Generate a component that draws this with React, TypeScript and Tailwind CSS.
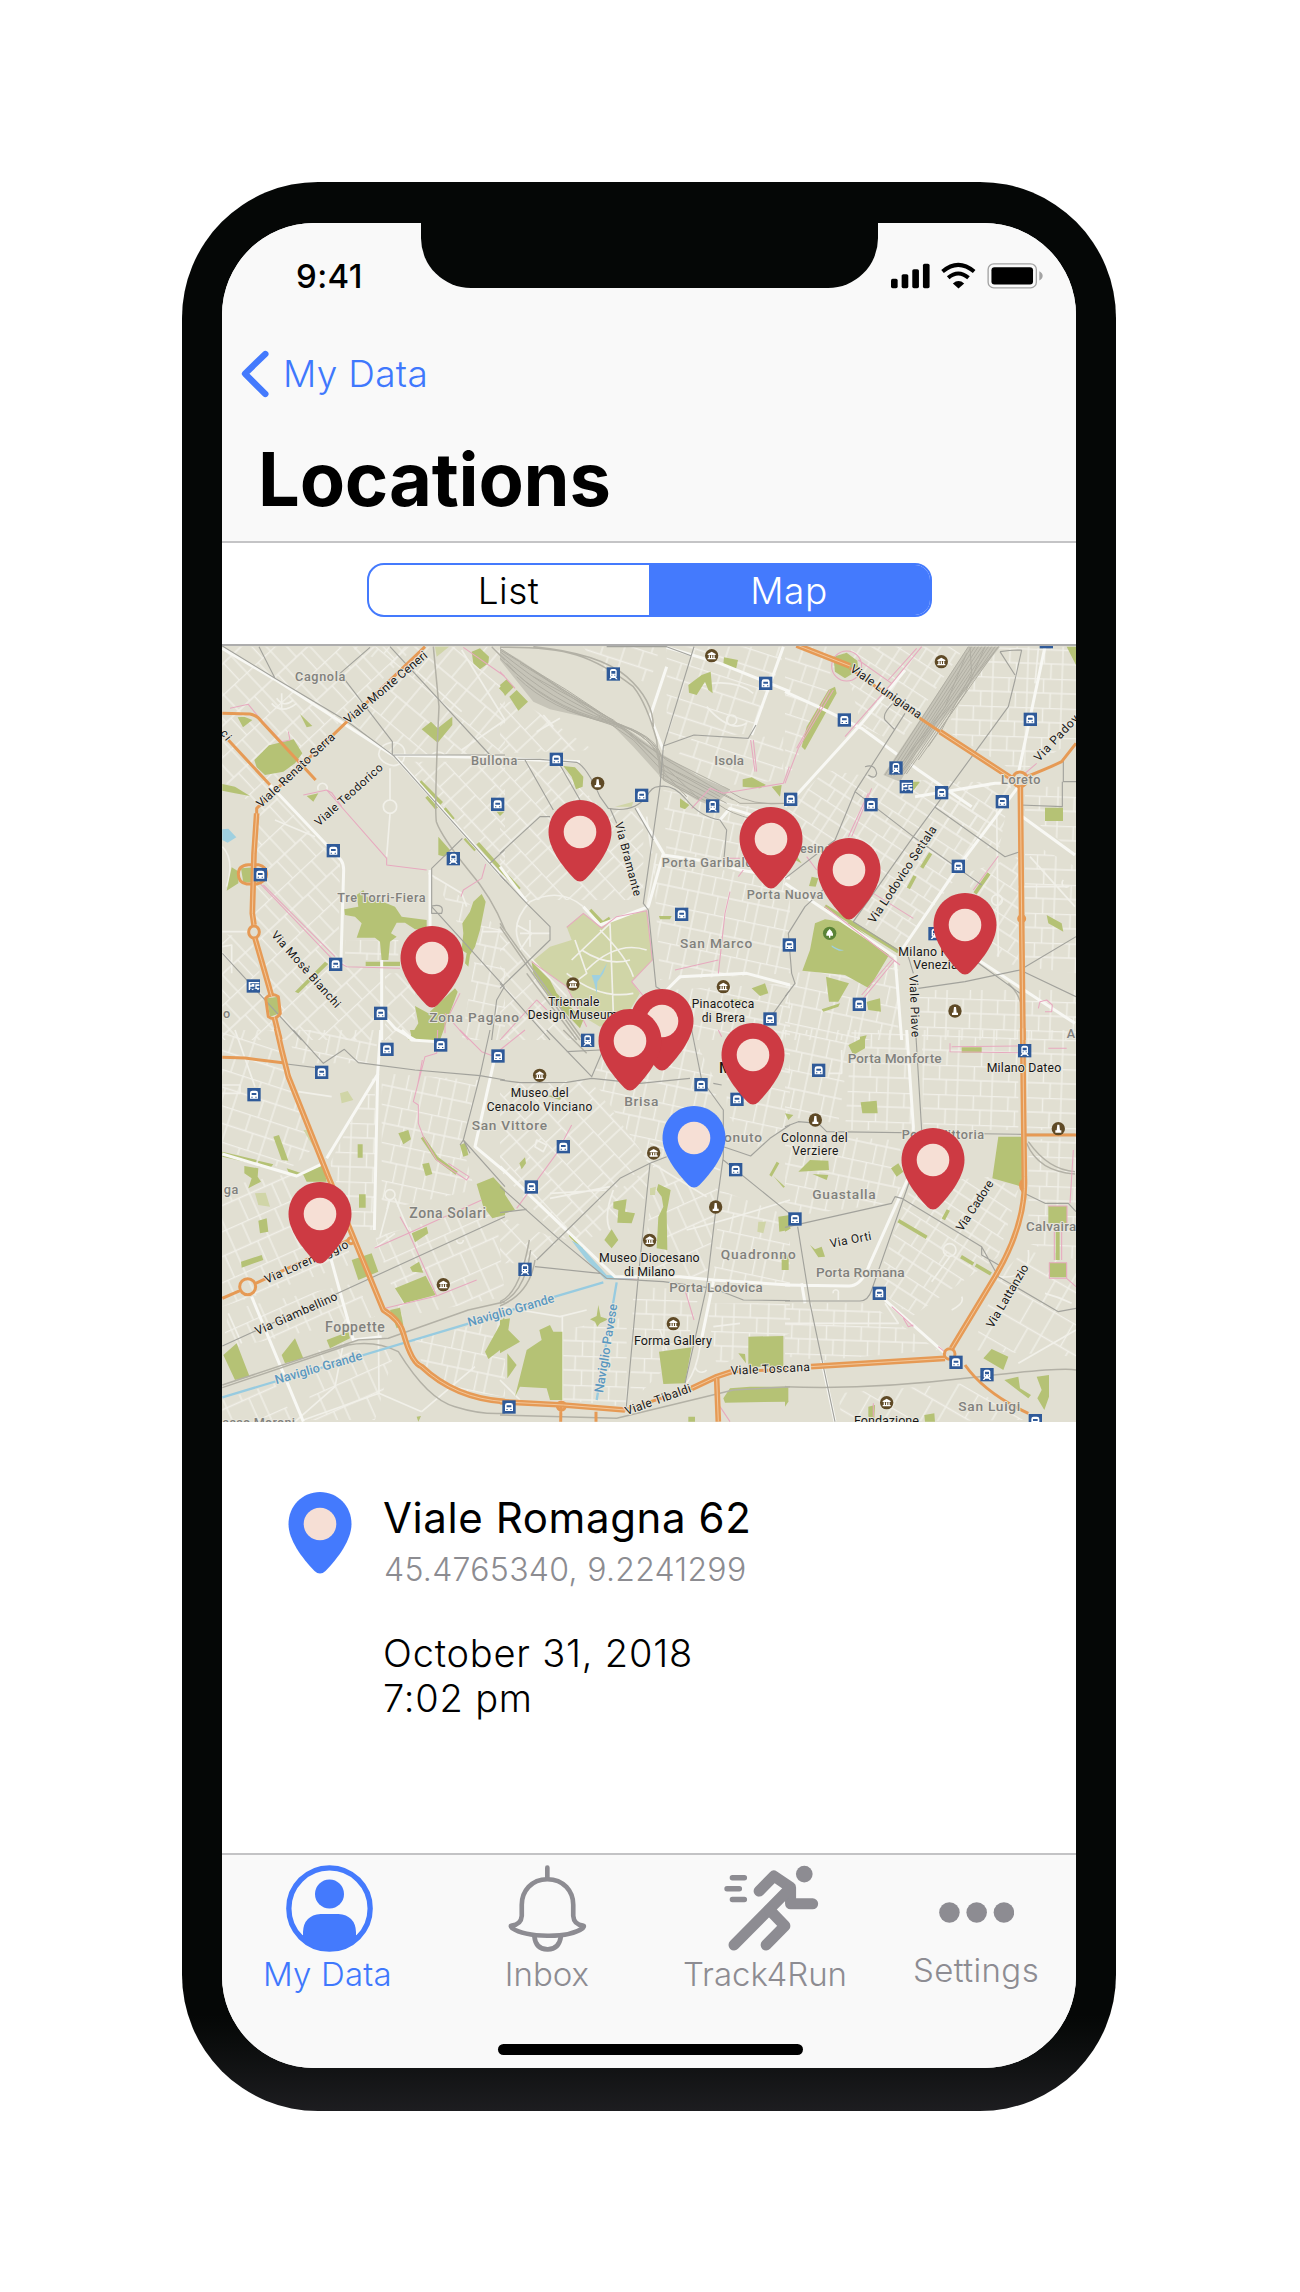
import React from "react";

type RegionData = {
  x: number;
  y: number;
  grids: [string, string][];
  parks: string;
  light?: string;
  strips?: string;
  water?: string;
  canal?: string;
  minor: string;
  main: string;
  tram: string;
  rail: string;
  yardFill?: string;
  yard?: string;
  pink: string;
  orange: string;
  thinOrange?: string;
};

// Each map tile is drawn in thirds of a pixel from its own origin.
const TILES: RegionData[] = [
  {
    x: 215, y: 640,
    grids: [
      ["g1", "22,20 600,20 120,500 22,420"],
      ["g2", "400,20 870,20 870,340 540,345 400,240 560,90"],
      ["g3", "560,365 870,365 870,700"],
      ["g1", "130,520 165,450 375,670 370,960 500,1000 500,1200 200,1200 120,860"],
      ["g4", "390,900 550,900 550,960 390,960"],
      ["g5", "650,700 870,880 870,1200 740,1200 780,950"],
      ["g1", "22,880 110,900 185,1200 22,1200"],
      ["g1", "510,1000 600,1000 600,1200 510,1200"],
    ],
    parks: "M68 232L88 230 112 240 84 262ZM118 360L162 316 236 298 262 340 240 370 205 395 150 405 125 382ZM255 222L292 258 275 262ZM22 432L60 440 105 468 60 460 22 452ZM50 682L72 695 70 730 35 752ZM770 35L795 25 822 50 820 70 795 88 775 70ZM620 268L648 245 668 265 712 230 712 255 668 308ZM670 590L705 630 690 650 670 645ZM868 128L852 145 868 162ZM388 808L430 800 425 765 445 750 455 770 490 780 540 800 560 830 635 840V868L600 868 570 848 545 848 528 880 545 890 525 905 520 960 500 960 495 905 480 893 425 893 440 850 420 830 390 825ZM800 762L812 785 795 870 780 920 765 945 760 980 750 970 755 940 740 930 745 880 742 850 765 815 775 785ZM452 965H555V978H452ZM600 1098L640 1120 720 1045 728 1055 675 1200 580 1200 610 1150ZM240 1055L330 965 340 972 250 1060ZM78 685L120 682 130 725 85 728ZM155 1075L190 1070 195 1120 165 1130ZM275 468L310 460 295 485ZM845 515H868L855 528Z",
    light: "M660 20H702L665 50ZM445 870L480 855 500 890 450 892Z",
    strips: "M615 425L680 490M688 505L715 538M750 595L782 630M788 610L868 700M635 470L665 505",
    water: "M22 568L40 566 64 592 38 608 22 600Z",
    minor: "M170 190Q200 225 245 190M185 175Q205 205 235 180M200 160V205M500 322Q480 345 505 365Q540 390 565 362Q580 320 545 308Q515 305 500 322M525 385V480M505 500A20 20 0 1 0 545 500A20 20 0 1 0 505 500M525 522L515 650M22 620Q60 660 35 740M22 875H100M22 920L50 915V1000M180 540L300 590M310 450A14 14 0 1 1 335 450M640 700L740 760 755 800M690 350A20 14 0 1 0 650 350M800 875H870M740 330L870 240M740 30L870 240M600 90L740 215",
    main: "M160 430L378 660Q386 672 386 690L378 960M500 960V1200M530 345L870 354M22 25L180 118 540 350 870 720M500 1120L540 1165 600 1200M645 690V860",
    tram: "M22 18L180 115 395 243 535 346 870 722M132 20L180 115M525 20L825 345M465 22L375 100 532 305V345H870M742 595L650 685V800L868 1040M22 940L260 1200M825 670L868 630M868 1040L845 1080 830 1200M650 798Q690 790 680 820H650Z",
    rail: "M655 20L672 200Q658 500 664 545Q680 590 760 690Q830 770 870 870M830 20L870 60",
    pink: "M45 205L100 193 130 230 200 305 225 300 220 275M265 465L335 450 515 655V675L635 690M135 730L350 955 395 980 555 985M145 735L360 950M745 22L868 108M738 770L745 750 800 715 812 672M735 1060L690 1150 690 1180M335 450L350 458 380 500M690 1120L760 1200",
    orange: "M125 520L117 640 112 820 117 855M120 895Q165 1050 170 1070M178 1132L195 1200",
    thinOrange: "M22 220L105 222Q125 225 140 245L302 420M40 300L165 435M125 525V505L630 20M100 674H130Q155 680 155 702T125 732H95Q70 728 70 702T100 674ZM101 876A16 18 0 1 0 133 876A16 18 0 1 0 101 876M152 1075Q170 1055 190 1070L196 1120Q180 1145 160 1130Z",
  },
  {
    x: 500, y: 640,
    grids: [
      ["g3", "0,190 60,180 280,330 0,340"],
      ["g3", "0,365 170,370 300,500 430,520 430,780 250,780 80,780 0,680"],
      ["g6", "500,20 860,20 760,280 500,300"],
      ["g6", "580,290 850,290 850,420 640,440 520,360"],
      ["g5", "460,660 870,720 870,1000 480,1020"],
      ["g5", "490,450 860,520 860,690 500,640"],
      ["g1", "0,850 95,980 240,1200 0,1200"],
      ["g5", "500,1050 870,1030 870,1200 580,1200"],
      ["g6", "250,20 480,20 450,130 300,90"],
    ],
    parks: "M0 135L20 118 42 140 15 168ZM28 170L50 150 84 185 55 212ZM565 135L605 105 632 95 638 160 625 150 615 125 590 165 567 158ZM672 52L714 60 708 88 670 72ZM190 378L225 382 250 410 248 440 228 448 215 410ZM728 418L755 412 798 435 780 445 728 440ZM815 440L845 435 840 470ZM540 475L568 495 555 508 540 502ZM95 965L150 1020 170 1060 250 1140 240 1165 150 1070 100 1000ZM477 828L515 828 510 838 480 838ZM755 1045L795 1030 805 1060 780 1068ZM690 1078L728 1080 700 1100Z",
    light: "M250 820L305 862 350 835 440 812 457 960 395 1025 420 1060 390 1110 300 1160 250 1130 200 1040 95 965 150 920 215 900 200 860ZM345 500L400 485 395 500Z",
    strips: "M0 685L58 748M270 810L308 850L330 835",
    water: "M275 1005L300 1005 322 968 310 1000 292 1025 290 1062 283 1030Z",
    minor: "M470 640L440 800M680 240A15 15 0 1 0 710 240A15 15 0 1 0 680 240M580 140Q700 110 760 160M620 200Q690 280 740 250M215 960L330 850M245 930Q320 980 390 960M260 990Q350 900 440 930M200 1000Q300 1080 400 1060M330 850L340 1120M300 870Q380 950 400 1010M225 900L260 1000 220 1030M440 530L455 640M110 275L180 235M130 225L160 260M60 880H150M50 855L95 880 60 930M90 840V920M250 800Q180 740 90 785Q20 860 70 930L200 1070",
    main: "M0 355L240 365M500 22L660 70 870 155M850 20L755 285M490 645L630 665 720 690 870 715M490 330L450 230 500 80M660 540L690 505 870 560M410 505L490 640 445 800 300 855 250 800M0 680L80 785M500 1050L540 1010 740 1000 870 1035",
    tram: "M582 20L490 320 480 440 430 790 445 810 468 1040 500 1060M490 318L582 285 745 295 768 255M0 358H120L230 367Q260 380 300 470L325 505Q400 520 440 470 455 440 475 440Q520 430 560 480T660 540L680 570 672 655M75 360L160 510M180 375L240 480M0 640L120 530H150M0 705L80 790 150 860V900L0 1045M330 505L350 550M405 505L460 600M870 1050L820 1120M320 20H500L575 48M0 1030L150 1200",
    rail: "M0 850L100 990 250 1200M0 860L90 990 240 1200M80 1000L230 1200M0 22Q150 20 230 45T400 140Q440 190 470 300L480 400M100 20Q300 40 380 110T460 260",
    yardFill: "M0 25L60 60 180 140 320 228 400 280 490 345 600 410 690 450 640 500 590 480 490 420 400 320 330 248 150 208 100 185 40 110 0 60Z",
    yard: "M0 25L320 235 400 290 490 350 690 450M0 35Q180 180 330 240T480 370L700 480M0 45Q160 190 320 240T480 385L680 490M0 55Q140 200 320 242T480 400L650 490M20 70Q140 205 330 248T480 410L630 490M50 110Q150 210 330 250T490 420L600 480M0 30L200 150 380 270 500 360 720 490 870 490M100 110L340 240 490 375 660 470M60 70L320 230M90 85L400 300 560 470M200 210L380 270 600 480M690 455Q750 500 870 490M640 480Q700 540 870 555",
    pink: "M575 505L630 445 670 460 850 430 868 380M752 300L765 395M760 300L770 395M690 755L675 820 655 1000M525 990L655 960M200 862L250 820 305 864 350 830 440 812 457 960 395 1025 440 1080M95 965L200 1040 260 1160M0 1200L110 1080 140 1110M0 95L45 145M730 690L715 710M672 655H720",
    orange: "",
  },
  {
    x: 785, y: 640,
    grids: [
      ["g6", "0,20 130,20 140,140 60,300 0,440"],
      ["g7", "200,20 540,20 340,310 230,260 190,110"],
      ["g7", "0,520 120,390 330,420 620,500 540,680 350,920 200,830 130,680"],
      ["g4", "620,20 873,20 873,300 700,400 480,270"],
      ["g7", "400,420 680,430 640,640 480,560"],
      ["g4", "720,440 873,440 873,640 720,520"],
      ["g4", "720,600 873,680 873,1000 720,980"],
      ["g4", "400,1050 873,1050 873,1200 400,1200"],
      ["g7", "540,700 700,650 700,980 640,960"],
      ["g5", "0,1000 340,980 340,1200 0,1200"],
    ],
    parks: "M145 50L185 38 217 62 220 90 180 115 150 95ZM150 140L155 160 60 330 50 320 65 260 130 150ZM380 425L405 425 385 452ZM780 503H834V543H780ZM845 20H873V75ZM80 710L100 715 92 740 72 738ZM120 838L200 850 312 945 252 1045 180 1005 52 992 75 930 90 850ZM123 1010L192 1030 160 1085 132 1085ZM110 1108L165 1090 160 1100 115 1115ZM245 1085L285 1075 288 1115 250 1110ZM785 825L830 850 835 875 790 850ZM30 640L50 670 30 660ZM225 1190L245 1186 240 1200H225Z",
    strips: "M437 640L410 683M390 708L370 745M612 700L570 760M120 798L340 935",
    water: "M140 916Q160 930 177 930Q165 938 140 920Z",
    minor: "M620 780A16 16 0 1 0 652 780A16 16 0 1 0 620 780M180 40V115M145 80H218M635 500L640 950M760 25L750 130M835 720A9 9 0 1 0 853 738M700 740H850M735 650L870 800",
    main: "M0 155L110 205 230 265 400 390 560 500M780 20L700 400M360 90L230 250 30 470 0 500M0 730L330 950 350 1200M700 440L520 680 350 930M705 525L870 645M390 470L630 430 690 430M580 960L870 1150",
    tram: "M360 220L210 455 150 600 0 715M710 30L690 120 670 200 385 590 205 845 370 950 385 1000M210 455L385 590 590 735M448 500L660 650 705 635M873 425H835V355M832 425V500L705 495M645 35Q680 30 710 30M645 35L690 105M330 185Q290 220 300 240L330 270M400 1045L540 1025 705 990 873 890M705 990L873 1070M560 955L705 1060M135 730L60 800 10 880 20 1000 30 1030 0 1070M240 380Q270 370 275 400Q270 420 250 405",
    rail: "M670 1030Q705 1060 715 1120",
    yardFill: "M550 20H645L395 340 345 425 295 405Z",
    yard: "M550 20L300 405M560 20L310 405M570 20L318 408M580 20L326 408M590 20L334 405M600 20L342 405M610 20L350 400M620 20L358 402M630 20L364 402M640 20L400 360M555 20L560 100 470 270M600 20L540 160 430 320M640 20L520 170 380 330M545 40L480 200 350 370",
    pink: "M410 20L320 130 180 290M395 25L310 120M220 60L320 130M145 150L40 325 0 430M135 150L35 325M260 445L200 590M250 460L190 590M265 760L385 835M640 648L565 750M120 800L345 975M330 960L235 1075M320 960L230 1065M760 1105L765 1085 785 1080 802 1095 800 1115 780 1115M720 400L755 370M140 78A45 45 0 1 0 230 78A45 45 0 1 0 140 78M65 650L95 690",
    orange: "M35 15L195 78M465 275L680 415M706 440L710 840 714 1200",
    thinOrange: "M195 85L405 235 465 275M683 418A22 22 0 1 0 727 418A22 22 0 1 0 683 418M725 410Q800 380 830 365L873 310M701 836A9 9 0 1 0 719 836A9 9 0 1 0 701 836",
  },
  {
    x: 215, y: 1030,
    grids: [
      ["g6", "22,0 185,0 300,350 220,420 22,360"],
      ["g4", "345,400 480,130 480,600 410,600"],
      ["g5", "500,130 790,150 740,340 780,480 500,540"],
      ["g8", "22,470 230,430 400,660 420,700 22,830"],
      ["g8", "40,840 420,760 480,860 22,960"],
      ["g8", "480,620 840,520 870,800 560,860"],
      ["g5", "600,930 870,860 870,1100 720,1080 620,1000"],
      ["g8", "270,960 540,960 480,1170 290,1170"],
      ["g5", "220,0 490,0 480,100 240,100"],
      ["g8", "22,1110 180,1060 240,1175 22,1175"],
    ],
    parks: "M585 0H665L655 35 590 20ZM175 320L192 315 220 392 200 390ZM22 365L125 390 122 403 22 380ZM130 392L175 403 165 415 128 408ZM215 415L260 430 325 405 335 455 275 455 265 435 225 435ZM88 408L130 415 128 440 138 455 100 475 110 445 88 430ZM130 572L155 565 160 605 135 610ZM78 695L140 675 145 690 80 713ZM428 343H443V383H428ZM432 493H452V533H432ZM550 310L580 300 588 328 565 343ZM622 402L642 398 652 432 632 438ZM735 345L752 338 760 375 745 380ZM785 462L835 442 870 480V555L832 565 805 530ZM590 610L635 590 640 610 600 637ZM585 712L612 695 625 728 592 725ZM540 775L632 737 662 795 568 820ZM410 690L470 670 490 725 430 750ZM25 975L65 940 104 1040 60 1050ZM200 975L240 925 265 985 210 1000ZM335 930L400 905 405 925 345 955ZM525 840L555 833 565 885 545 895ZM810 965L868 860V950L820 987ZM605 1160L618 1158 610 1175Z",
    light: "M375 190L398 183 415 210 380 220ZM120 490L152 488 165 530 130 525ZM265 300L280 300 305 350 295 350Z",
    strips: "M622 322L665 385 725 430",
    canal: "M22 1102L780 875 870 850",
    minor: "M510 494A14 14 0 1 0 540 494A14 14 0 1 0 510 494M725 630A10 10 0 1 0 745 630M525 508L495 620M540 505L580 600M22 165H75V190H22M60 0L120 170M250 185L350 200M540 610L478 655M400 860L370 900M490 880L492 1090 620 1145M492 1090L265 1170M620 1145L780 1010M40 850L80 940M240 1175L360 1070 385 940",
    main: "M497 0L488 130 478 600M490 130L335 385M22 372L245 438 325 400M110 800L265 1175M840 80L780 350 870 425M560 0L590 30 670 35M335 640L415 930 500 920",
    tram: "M235 0L325 100 388 58 430 98 600 120 795 137 870 150M215 102L320 115M825 0L795 137 745 330 870 470M22 948L870 560M735 345L745 330 765 370",
    rail: "M22 1065L430 930 520 925 760 840 870 815M22 1073L400 945Q480 930 550 965Q640 1110 720 1130Q800 1155 870 1150",
    pink: "M668 0L665 70 630 80 595 215 610 225 610 280 625 320 665 390 755 450 762 440 700 400M735 0L800 65 840 80M478 655L580 610 800 510M555 560L580 605 665 798M510 835L665 798 785 750M622 90L608 165",
    orange: "M185 -5L200 60 220 140 340 440 505 840Q555 870 565 910Q590 1000 620 1010Q720 1105 870 1115",
    thinOrange: "M22 82L90 84 215 100M22 805L75 782M122 760L400 630M74 770A24 24 0 1 0 122 770A24 24 0 1 0 74 770M399 632A9 9 0 1 0 417 632A9 9 0 1 0 399 632",
  },
  {
    x: 500, y: 1030,
    grids: [
      ["g3", "0,160 270,150 450,400 340,480 170,620 0,420"],
      ["g5", "290,70 570,0 660,180 490,380 440,390 280,150"],
      ["g1", "170,620 450,410 440,500 250,640"],
      ["g8", "460,400 660,480 620,740 430,740"],
      ["g5", "660,480 870,560 870,760 640,750"],
      ["g4", "190,900 380,860 380,1130 190,1110"],
      ["g4", "400,770 600,780 560,950 390,1120"],
      ["g4", "620,820 870,820 870,910 650,1010"],
      ["g3", "0,560 180,630 100,700 0,700"],
      ["g5", "680,0 870,0 870,280 760,360 680,250"],
    ],
    parks: "M0 470L45 540 0 555ZM340 515L380 508 375 545 405 550 395 580 352 578 355 540 340 535ZM475 462L512 480 505 520 500 545 502 660 470 655 475 560 490 530 485 500 470 480ZM335 598L355 630 335 655 313 630ZM835 560L870 555 865 600 838 605ZM58 400L75 382 78 400 65 418ZM205 605L255 650 245 658 208 620ZM140 197L190 195 180 210ZM295 825L302 860 325 868 300 880 292 890 285 875 270 868 290 858ZM477 965L575 952 555 1060 490 1062ZM745 920L850 918V1010H745ZM715 970L735 972 738 1000ZM670 1105L690 1075 750 1070 865 1070V1115L675 1118ZM845 675H866V720H845ZM0 870L30 865 25 900 60 935 0 970ZM45 1100L80 960 125 930 118 900 150 885 160 905H187V1110L150 1110 140 1075 60 1070ZM22 970L50 1005 22 1045ZM808 435L830 395 838 400 815 440ZM820 438L855 470 850 473ZM565 1160H585V1175H565Z",
    light: "M775 575H798L790 610 772 605ZM450 475L468 470 465 495 450 495Z",
    water: "M215 632L240 645 320 735 415 742 380 750 315 748 260 690Z",
    canal: "M310 757L165 800 0 850M350 757L290 1110",
    minor: "M110 330L140 345 130 365 105 350ZM340 480Q310 560 330 600M0 830L180 860 260 840M187 860V1150M150 505L330 470M150 490L320 480M450 340L660 420M440 390L620 500M560 600Q680 570 870 510M0 1050L60 1110M590 1000A18 16 0 1 0 620 1020M500 960L480 900M600 950Q590 1020 560 1060M155 905V1080M165 930V1050M640 890L720 880",
    main: "M0 410L345 740 540 740 640 750 870 765M640 755L600 950",
    tram: "M0 470L178 628 320 745 490 755 640 775 730 810 870 812M105 710L300 730M110 690L360 445 450 400 500 380M450 400L413 760 378 1140M0 150L60 158 200 157 275 145 420 160 570 145M140 0L275 140 305 70M575 0L605 150 670 240V380L645 560 620 770 555 1060M670 350Q730 370 752 378L810 325 870 285M670 390L868 550M200 65L300 60M0 548L80 538M640 160L665 165",
    rail: "M0 815Q60 790 88 630M0 828Q90 790 105 690M0 820Q75 790 92 660M190 0L260 70M0 1155L350 1165 700 1080 870 1070",
    pink: "M215 285L170 370 50 535M555 780L582 870M0 60L75 0M355 748H410M655 0L665 20M660 1130L690 1175",
    orange: "M0 1115L190 1125 375 1140M575 1075L650 1040 695 1025M650 1045L655 1175",
    thinOrange: "M375 1140L575 1075M695 1025L870 1018M183 1130L182 1175M288 1145V1175M172 1128A12 12 0 1 0 196 1128A12 12 0 1 0 172 1128",
  },
  {
    x: 785, y: 1030,
    grids: [
      ["g5", "0,0 200,0 160,280 0,260"],
      ["g4", "200,0 370,0 380,300 180,300"],
      ["g4", "410,0 700,0 700,300 415,300"],
      ["g4", "725,0 873,0 873,300 725,300"],
      ["g7", "380,460 620,440 700,480 640,680 380,860 270,770"],
      ["g5", "0,310 330,330 380,420 320,520 0,560"],
      ["g4", "0,820 250,820 460,960 120,990 0,980"],
      ["g9", "640,740 720,660 873,700 873,980 560,960"],
      ["g4", "730,330 873,320 873,690 730,640"],
      ["g9", "160,1090 540,1060 720,1170 170,1175"],
    ],
    parks: "M190 45L240 20 240 55 205 75ZM227 217L275 212 278 250 232 250ZM40 425L75 390 130 392 132 420ZM82 432L130 435 125 450ZM318 415L340 400 355 425 335 440ZM640 320H715L710 470 622 445ZM75 645L90 658 110 650 120 680 100 682ZM790 528H846V580H790ZM812 605H824V690H812ZM793 698H845V742H793ZM530 52H590V68H530ZM595 985L620 957 670 980 655 1020ZM658 1050L700 1040 705 1075 738 1095 730 1105ZM755 1040L792 1035V1100L778 1140 757 1105 770 1080ZM418 1155L448 1150 450 1175H420ZM250 1130L270 1125 268 1165 250 1160ZM0 575L18 595 0 605ZM0 1065L10 1115 0 1130ZM0 250L25 255 10 270Z",
    strips: "M490 540L475 568M340 572L425 622M528 680L565 702M572 705L618 732",
    minor: "M475 660A19 19 0 1 0 513 660A19 19 0 1 0 475 660M494 680L440 755M130 130L170 130 170 60M145 790A8 8 0 1 1 160 790V810M530 800Q540 820 500 840M730 660Q740 750 640 740M780 790Q820 800 860 820M0 880H340L300 820M700 1000L873 900",
    main: "M365 0L385 290 380 420 255 700Q230 770 190 768L0 765M110 990L150 1175M300 810L480 970M50 760L60 820",
    tram: "M393 20L410 300M0 290L40 275 100 280 125 305 720 313 870 313M375 450L260 780Q250 812 225 813H0M0 592L320 520 330 500 350 505 590 650 640 740 820 845 873 835M38 590L75 820 150 1175M590 650V675L650 710M718 490L780 520H850L873 545",
    rail: "M0 1070Q250 1080 540 1045T873 1020M725 340Q760 425 870 432M730 335Q790 420 870 425",
    pink: "M495 40V65L700 68M500 50L700 48M790 55H845M865 360L855 520M808 600V690M830 600V690M845 745L873 770M320 830L385 890M355 865L370 890 385 885M460 950L485 970M265 1120V1160M790 528H846V580M793 698H845V745H793Z",
    orange: "M713 -5L718 440Q725 580 630 740L500 955M78 1010L480 985",
    thinOrange: "M720 315H873M478 972A16 16 0 1 0 510 972A16 16 0 1 0 478 972M540 1005Q600 1090 730 1150M712 450Q700 470 715 485",
  },
];

const GRIDS: [string, number, number, number][] = [
  ["g1", -43, 48, 68],
  ["g2", 40, 56, 74],
  ["g3", 47, 46, 64],
  ["g4", 2, 52, 44],
  ["g5", 12, 46, 56],
  ["g6", 18, 60, 52],
  ["g7", 33, 50, 42],
  ["g8", -24, 54, 70],
  ["g9", 30, 70, 82],
];

const GRAY = "#81817d";
const INK = "#171717";
const BLUE = "#5b98c0";

// text, tile, baseline start x/y, baseline end x/y, colour, size
type LabelData = [string, number, number, number, number, number, string, number];

const LABELS: LabelData[] = [
  ["Cagnola", 0, 240, 124, 391, 124, GRAY, 38],
  ["Viale Monte Ceneri", 0, 400, 253, 640, 50, INK, 36],
  ["Viale Renato Serra", 0, 138, 505, 362, 294, INK, 36],
  ["Viale Teodorico", 0, 312, 560, 506, 386, INK, 35],
  ["Via Mosè Bianchi", 0, 167, 886, 362, 1106, INK, 35],
  ["ci", 0, 15, 280, 34, 304, INK, 34],
  ["Tre Torri-Fiera", 0, 367, 787, 632, 787, GRAY, 38],
  ["Bullona", 0, 768, 376, 907, 376, GRAY, 38],
  ["Zona Pagano", 0, 643, 1145, 912, 1145, GRAY, 41],
  ["o", 0, 24, 1134, 45, 1134, GRAY, 38],
  ["Via Bramante", 1, 344, 550, 402, 770, INK, 35],
  ["Isola", 1, 643, 375, 732, 375, GRAY, 40],
  ["Porta Garibaldi", 1, 485, 682, 770, 682, GRAY, 38],
  ["San Marco", 1, 540, 924, 757, 924, GRAY, 41],
  ["Triennale", 1, 145, 1098, 298, 1098, INK, 36],
  ["Design Museum", 1, 83, 1138, 352, 1138, INK, 36],
  ["Pinacoteca", 1, 575, 1105, 763, 1105, INK, 36],
  ["di Brera", 1, 605, 1145, 735, 1145, INK, 36],
  ["Porta Nuova", 1, 740, 778, 970, 778, GRAY, 38],
  ["esine", 2, 45, 640, 138, 640, GRAY, 38],
  ["Viale Lunigiana", 2, 193, 92, 400, 237, INK, 36],
  ["Via Padova", 2, 762, 367, 898, 222, INK, 36],
  ["Loreto", 2, 648, 433, 766, 433, GRAY, 38],
  ["Via Lodovico Settala", 2, 268, 852, 456, 568, INK, 36],
  ["Milano Porta", 2, 340, 947, 560, 947, INK, 37],
  ["Venezia", 2, 385, 986, 518, 986, INK, 37],
  ["Viale Piave", 2, 373, 1005, 380, 1192, INK, 36],
  ["A", 2, 845, 1195, 870, 1195, GRAY, 38],
  ["Museo del", 4, 32, 201, 206, 201, INK, 36],
  ["Cenacolo Vinciano", 3, 815, 242, 1132, 242, INK, 36],
  ["San Vittore", 3, 770, 299, 996, 299, GRAY, 41],
  ["ga", 3, 26, 492, 70, 492, GRAY, 38],
  ["Zona Solari", 3, 583, 565, 813, 565, GRAY, 42],
  ["Foppette", 3, 330, 906, 509, 906, GRAY, 42],
  ["Via Lorenteggio", 3, 155, 761, 403, 652, INK, 36],
  ["Via Giambellino", 3, 127, 916, 370, 808, INK, 36],
  ["Naviglio Grande", 3, 184, 1063, 444, 988, BLUE, 38],
  ["Naviglio Grande", 3, 762, 890, 1020, 816, BLUE, 38],
  ["asso Moroni", 3, 22, 1190, 240, 1190, GRAY, 38],
  ["Brisa", 4, 373, 227, 475, 227, GRAY, 41],
  ["onuto", 4, 672, 337, 786, 337, GRAY, 41],
  ["M", 4, 657, 128, 696, 128, INK, 46],
  ["Quadronno", 4, 662, 686, 887, 686, GRAY, 41],
  ["Museo Diocesano", 4, 297, 697, 599, 697, INK, 37],
  ["di Milano", 4, 372, 737, 525, 737, INK, 37],
  ["Porta Lodovica", 4, 508, 786, 788, 786, GRAY, 40],
  ["Forma Gallery", 4, 402, 946, 636, 946, INK, 38],
  ["Naviglio Pavese", 4, 309, 1090, 352, 824, BLUE, 38],
  ["Viale Tibaldi", 4, 380, 1156, 576, 1085, INK, 36],
  ["Viale Toscana", 4, 692, 1034, 930, 1023, INK, 36],
  ["Porta Monforte", 5, 188, 100, 470, 100, GRAY, 41],
  ["Milano Dateo", 5, 605, 127, 829, 127, INK, 37],
  ["Colonna del", 5, -12, 336, 188, 336, INK, 36],
  ["Verziere", 5, 22, 376, 160, 376, INK, 36],
  ["Porta Vittoria", 5, 350, 328, 597, 328, GRAY, 38],
  ["Guastalla", 5, 82, 507, 272, 507, GRAY, 41],
  ["Calvairate", 5, 723, 603, 910, 603, GRAY, 40],
  ["Via Orti", 5, 137, 653, 261, 629, INK, 36],
  ["Via Cadore", 5, 532, 606, 627, 460, INK, 36],
  ["Via Lattanzio", 5, 623, 896, 732, 712, INK, 36],
  ["Porta Romana", 5, 93, 741, 359, 741, GRAY, 41],
  ["San Luigi", 5, 520, 1143, 706, 1143, GRAY, 41],
  ["Fondazione", 5, 207, 1186, 402, 1186, INK, 38],
];

type MarkKind = "metro" | "train" | "bus" | "museum" | "monument" | "tree";

const MARKS: [MarkKind, number, number, number][] = [
  ["metro", 0, 355, 632], ["metro", 0, 136, 704], ["metro", 0, 848, 493], ["train", 0, 715, 656],
  ["metro", 0, 362, 973], ["metro", 0, 497, 1120], ["bus", 0, 115, 1038],
  ["train", 1, 340, 102], ["metro", 1, 797, 130], ["metro", 1, 169, 358], ["metro", 1, 425, 466],
  ["train", 1, 638, 498], ["metro", 1, 545, 823], ["metro", 1, 810, 1137],
  ["museum", 1, 635, 47], ["monument", 1, 293, 430], ["museum", 1, 219, 1032], ["museum", 1, 670, 1040],
  ["metro", 2, 784, 5], ["metro", 2, 178, 240], ["metro", 2, 736, 238], ["metro", 2, 17, 478],
  ["train", 2, 333, 384], ["bus", 2, 364, 440], ["metro", 2, 470, 458], ["metro", 2, 258, 494],
  ["metro", 2, 652, 485], ["metro", 2, 520, 679], ["metro", 2, 13, 915], ["train", 2, 450, 881],
  ["metro", 2, 223, 1093], ["museum", 2, 469, 65], ["monument", 2, 510, 1113], ["tree", 2, 134, 880],
  ["metro", 3, 516, 58], ["metro", 3, 677, 45], ["metro", 3, 849, 78], ["metro", 3, 320, 127],
  ["metro", 3, 117, 194], ["museum", 3, 685, 764],
  ["train", 4, 263, 31], ["metro", 4, 603, 164], ["metro", 4, 711, 208], ["metro", 4, 190, 350],
  ["metro", 4, 94, 471], ["metro", 4, 707, 419], ["train", 4, 75, 718], ["metro", 4, 27, 1131],
  ["museum", 4, 119, 136], ["museum", 4, 461, 369], ["monument", 4, 647, 531], ["museum", 4, 449, 631],
  ["museum", 4, 520, 881],
  ["train", 5, 719, 62], ["metro", 5, 101, 121], ["metro", 5, 30, 567], ["metro", 5, 283, 790],
  ["metro", 5, 513, 997], ["train", 5, 606, 1034], ["metro", 5, 751, 1172],
  ["monument", 5, 91, 270], ["monument", 5, 820, 296], ["museum", 5, 305, 1118],
];

function Mark({ kind }: { kind: MarkKind }) {
  if (kind === "museum")
    return (
      <g>
        <circle r="20" fill="#5f4a26" />
        <path d="M-12 -5L0 -12 12 -5V-2H-12ZM-9 -1H-5V7H-9ZM-2 -1H2V7H-2ZM5 -1H9V7H5ZM-12 7H12V11H-12Z" fill="#fff" />
      </g>
    );
  if (kind === "monument")
    return (
      <g>
        <circle r="20" fill="#5f4a26" />
        <path d="M-3 -12H3L5 5H9V12H-9V5H-5Z" fill="#fff" />
      </g>
    );
  if (kind === "tree")
    return (
      <g>
        <circle r="20" fill="#5a8336" />
        <path d="M-2 13V7H-10V1L-7 -4H-8L0 -13 8 -4H7L10 1V7H2V13Z" fill="#fff" />
      </g>
    );
  return (
    <g>
      <rect x="-20" y="-20" width="40" height="40" fill="#2f5a99" />
      {kind === "metro" && (
        <path fillRule="evenodd" d="M-12 12V-5Q-12 -12 -5 -12H5Q12 -12 12 -5V12ZM-7 -5V1H7V-5ZM-8 6V9H-4V6ZM4 6V9H8V6Z" fill="#fff" />
      )}
      {kind === "train" && (
        <path fillRule="evenodd" d="M-10 8V-10Q-9 -15 -4 -15H4Q9 -15 10 -10V8H7L13 16H8L5 12H-5L-8 16H-13L-7 8ZM-6 -9V-1H6V-9ZM-6 2V5H-3V2ZM3 2V5H6V2Z" fill="#fff" />
      )}
      {kind === "bus" && (
        <path fillRule="evenodd" d="M-14 12V-12H18V-8H-9V-2H-5V-6H3V2H-9V8H6V-5H18V0H10V5H18V9L14 13 10 9H2L-2 13-6 9H-10V12Z" fill="#fff" />
      )}
    </g>
  );
}

const place = (x: number, y: number) => `translate(${x} ${y}) scale(0.33333)`;

function CityMap() {
  const layer = (
    key: keyof RegionData,
    attrs: React.SVGProps<SVGPathElement>,
  ) =>
    TILES.map((t, i) =>
      t[key] ? (
        <path key={`${key}${i}`} transform={place(t.x, t.y)} d={t[key] as string} fill="none" strokeLinejoin="round" {...attrs} />
      ) : null,
    );
  return (
    <svg viewBox="222 646 854 776" className="block h-[776px] w-[854px] bg-[#e1dfd2]">
      <defs>
        {GRIDS.map(([id, a, w, h]) => (
          <pattern key={id} id={id} width={w * 2} height={h * 2} patternUnits="userSpaceOnUse" patternTransform={`rotate(${a})`}>
            <path
              d={`M0 2H${w * 2}M0 ${h}H${w * 2}M3 0V${h * 2}M${w} 0V${h}M${w * 1.4} ${h}V${h * 2}`}
              stroke="#f1f0e9"
              strokeWidth="4"
              fill="none"
            />
          </pattern>
        ))}
      </defs>
      {TILES.map((t, i) => (
        <g key={i} transform={place(t.x, t.y)}>
          {t.grids.map(([id, pts], k) => (
            <polygon key={k} points={pts} fill={`url(#${id})`} />
          ))}
        </g>
      ))}
      {layer("light", { fill: "#d0d5a7" })}
      {layer("minor", { stroke: "#f1f0e9", strokeWidth: 5 })}
      {layer("parks", { fill: "#b5c275" })}
      {layer("strips", { stroke: "#b5c275", strokeWidth: 11 })}
      {layer("water", { fill: "#9fd0e0" })}
      {layer("main", { stroke: "#f8f8f4", strokeWidth: 9 })}
      {layer("yardFill", { fill: "#c6c4b8" })}
      {layer("yard", { stroke: "#b0aea3", strokeWidth: 3 })}
      {layer("rail", { stroke: "#b3b1a6", strokeWidth: 4.5 })}
      {layer("canal", { stroke: "#97cbe0", strokeWidth: 7 })}
      {layer("pink", { stroke: "#e7a9bf", strokeWidth: 3.2 })}
      {layer("tram", { stroke: "#a2a29c", strokeWidth: 3.4 })}
      {layer("thinOrange", { stroke: "#e69a55", strokeWidth: 9 })}
      {layer("orange", { stroke: "#e69a55", strokeWidth: 17 })}
      {layer("orange", { stroke: "#f1c79b", strokeWidth: 3 })}
      {MARKS.map(([kind, t, x, y], i) => (
        <g key={i} transform={`${place(TILES[t].x, TILES[t].y)} translate(${x} ${y})`}>
          <Mark kind={kind} />
        </g>
      ))}
      {LABELS.map(([text, t, x1, y1, x2, y2, color, size], i) => (
        <text
          key={i}
          transform={`${place(TILES[t].x, TILES[t].y)} translate(${x1} ${y1}) rotate(${(Math.atan2(y2 - y1, x2 - x1) * 180) / Math.PI})`}
          fontSize={size}
          fontWeight={color === INK && text !== "M" ? 430 : 500}
          textLength={Math.hypot(x2 - x1, y2 - y1)}
          fill={color}
          stroke="#e8e6dc"
          strokeWidth="6"
          paintOrder="stroke"
          strokeLinejoin="round"
          className="font-['Roboto',sans-serif]"
        >
          {text}
        </text>
      ))}
    </svg>
  );
}

function Pin({ color }: { color: string }) {
  return (
    <svg viewBox="0 0 64 82" className="block h-[82px] w-[64px]">
      <path d="M32 0C49.7 0 63.5 14 63.5 32C63.5 48 50 66 37.5 79Q32 84 26.500 79C14 66 0.500 48 0.500 32C0.500 14 14.300 0 32 0Z" fill={color} />
      <circle cx="32" cy="32" r="16.300" fill="#f6dfd5" />
    </svg>
  );
}

const RED = "#cd3a43";
const ACCENT = "#447afd";

const PINS: [number, number, string][] = [
  [431.7, 926, RED],
  [579.7, 800, RED],
  [771, 806.7, RED],
  [848.7, 838.3, RED],
  [964.7, 892.7, RED],
  [662, 988.7, RED],
  [630, 1009.3, RED],
  [752.7, 1022.7, RED],
  [693.7, 1105.7, ACCENT],
  [933, 1127.7, RED],
  [320, 1182, RED],
];

function StatusIcons() {
  return (
    <svg viewBox="726 276 460 80" className="mt-[6px] h-[27px] w-[153px]">
      <g fill="#000">
        <rect x="726" y="326" width="20" height="28" rx="5" />
        <rect x="758" y="312" width="20" height="42" rx="5" />
        <rect x="790" y="297" width="20" height="57" rx="5" />
        <rect x="822" y="281" width="20" height="73" rx="5" />
        <path d="M912 340Q929 325 946 340L929 355Z" />
      </g>
      <g fill="none" stroke="#000" strokeWidth="12">
        <path d="M881 304Q928 264 976 304" />
        <path d="M898 323Q928 297 959 323" />
      </g>
      <rect x="1018" y="281" width="145" height="72" rx="17" fill="none" stroke="#a3a3a3" strokeWidth="4" />
      <rect x="1028" y="291" width="125" height="52" rx="9" />
      <path d="M1172 303Q1182 308 1182 317T1172 331Z" fill="#a3a3a3" />
    </svg>
  );
}

function PersonIcon() {
  return (
    <svg viewBox="348 137 261 261" className="h-[87px] w-[87px]" fill={ACCENT}>
      <circle cx="478.500" cy="267.500" r="122" fill="none" stroke={ACCENT} strokeWidth="16" />
      <circle cx="478.500" cy="224" r="43.500" />
      <path d="M399 348V338Q401 288 452 284H505Q556 288 558 338V348L572 350Q530 395 478 395T385 350Z" />
    </svg>
  );
}

function BellIcon() {
  return (
    <svg viewBox="1012 132 243 268" className="h-[89px] w-[81px]" fill="none" stroke="#8d8c92" strokeWidth="14" strokeLinecap="round" strokeLinejoin="round">
      <path d="M1133 143V172" />
      <path d="M1133 178C1085 178 1056 214 1056 255V288Q1054 314 1026 317Q1020 318 1027 325Q1060 347 1133 348T1240 325Q1246 318 1240 317Q1213 314 1211 288V255C1211 214 1182 178 1133 178Z" />
      <path d="M1094 350Q1098 388 1133 389T1174 350" />
    </svg>
  );
}

function RunnerIcon() {
  return (
    <svg viewBox="226 134 284 260" className="h-[87px] w-[95px]" fill="none" stroke="#8d8c92" strokeLinecap="round" strokeLinejoin="round">
      <g strokeWidth="16">
        <path d="M251 172H287M235 205H272M251 237H287" />
      </g>
      <circle cx="466" cy="161" r="25" fill="#8d8c92" stroke="none" />
      <g strokeWidth="33">
        <path d="M331 212L375 167 425 201V250H491" />
        <path d="M420 207L256 373" />
        <path d="M362 268L408 316 352 373" />
      </g>
    </svg>
  );
}

function DotsIcon() {
  return (
    <svg viewBox="870 246 223 62" className="h-[21px] w-[75px]" fill="#8d8c92">
      <circle cx="901" cy="277" r="30.500" />
      <circle cx="982" cy="277" r="30.500" />
      <circle cx="1063" cy="277" r="30.500" />
    </svg>
  );
}

export default function App() {
  return (
    <div className="h-[2292px] w-[1300px] overflow-hidden bg-white pt-[182px] pl-[182px] font-['Inter',sans-serif] text-black">
      <div className="h-[1929px] w-[934px] rounded-[136px] bg-linear-to-b from-[#050706] from-95% to-[#1d1d20] pt-[41px] pl-[40px]">
        <div className="relative flex h-[1845px] w-[854px] flex-col overflow-hidden rounded-[92px] bg-white">
          <div className="absolute top-0 left-[199px] h-[65px] w-[457px] rounded-b-[50px] bg-[#050706]" />

          <header className="h-[320px] shrink-0 border-b-2 border-[#c4c4c6] bg-[#f9f9f9] pt-[33px]">
            <div className="flex h-10 justify-between pr-[32px] pl-[74px]">
              <span className="text-[33px] leading-10 font-[550] tracking-[0.4px]">9:41</span>
              <StatusIcons />
            </div>
            <div className="mt-[54px] flex h-12 items-center pl-[19px] text-[#3f78fd]">
              <svg viewBox="214 537 84 144" className="h-[48px] w-[28px]" fill="none" stroke={ACCENT} strokeWidth="19" strokeLinecap="round" strokeLinejoin="round">
                <path d="M287 549L226 608 287 669" />
              </svg>
              <span className="ml-[14px] text-[37px] leading-12 font-[330] tracking-[0.3px]">My Data</span>
            </div>
            <h1 className="mt-[36px] pl-[36px] text-[74px] leading-[90px] font-bold tracking-[-0.2px]">Locations</h1>
          </header>

          <div className="flex h-[103px] shrink-0 justify-center border-b-2 border-[#adadad] pt-[20px]">
            <div className="flex h-[54px] w-[565px] overflow-hidden rounded-[17px] border-2 border-[#447afd] text-[37px] leading-[51px] font-[350] tracking-[0.5px]">
              <div className="w-[280px] text-center">List</div>
              <div className="w-[281px] bg-[#447afd] text-center text-white">Map</div>
            </div>
          </div>

          <div className="relative shrink-0">
            <CityMap />
            {PINS.map(([x, y, color], i) => (
              <div key={i} className="absolute" style={{ left: x - 32 - 222, top: y - 646 }}>
                <Pin color={color} />
              </div>
            ))}
          </div>

          <div className="flex h-[431px] shrink-0 pt-[70px] pl-[66px]">
            <Pin color={ACCENT} />
            <div className="ml-[31px]">
              <div className="text-[42px] leading-[52px] font-[370] tracking-[0.6px]">Viale Romagna 62</div>
              <div className="pt-[1px] pl-px text-[32px] leading-[50px] font-[340] tracking-[0.3px] text-[#8c8c91]">45.4765340, 9.2241299</div>
              <div className="mt-[36px] text-[38px] leading-[45px] font-[350] tracking-[0.8px]">
                <div>October 31, 2018</div>
                <div>7:02 pm</div>
              </div>
            </div>
          </div>

          <nav className="relative flex h-[215px] shrink-0 border-t-2 border-[#c3c3c5] bg-[#f9f9f9] pl-[32px] text-[33px] leading-10 font-[330] text-[#8d8c92]">
            <div className="flex w-[150px] flex-col items-center pt-[10px] text-[#3f78fd]">
              <PersonIcon />
              <span className="mt-[2px] mr-[3px] tracking-[0.2px]">My Data</span>
            </div>
            <div className="ml-[75px] flex w-[136px] flex-col items-center pt-[9px]">
              <BellIcon />
              <span className="mt-[1px]">Inbox</span>
            </div>
            <div className="ml-[60px] flex w-[180px] flex-col items-center pt-[10px]">
              <div className="pl-[12px]"><RunnerIcon /></div>
              <span className="mt-[2px]">Track4Run</span>
            </div>
            <div className="ml-[50px] flex w-[142px] flex-col items-center pt-[47px]">
              <DotsIcon />
              <span className="mt-[27px] tracking-[0.4px]">Settings</span>
            </div>
            <div className="absolute bottom-[13px] left-[276px] h-[11px] w-[305px] rounded-full bg-black" />
          </nav>
        </div>
      </div>
    </div>
  );
}
